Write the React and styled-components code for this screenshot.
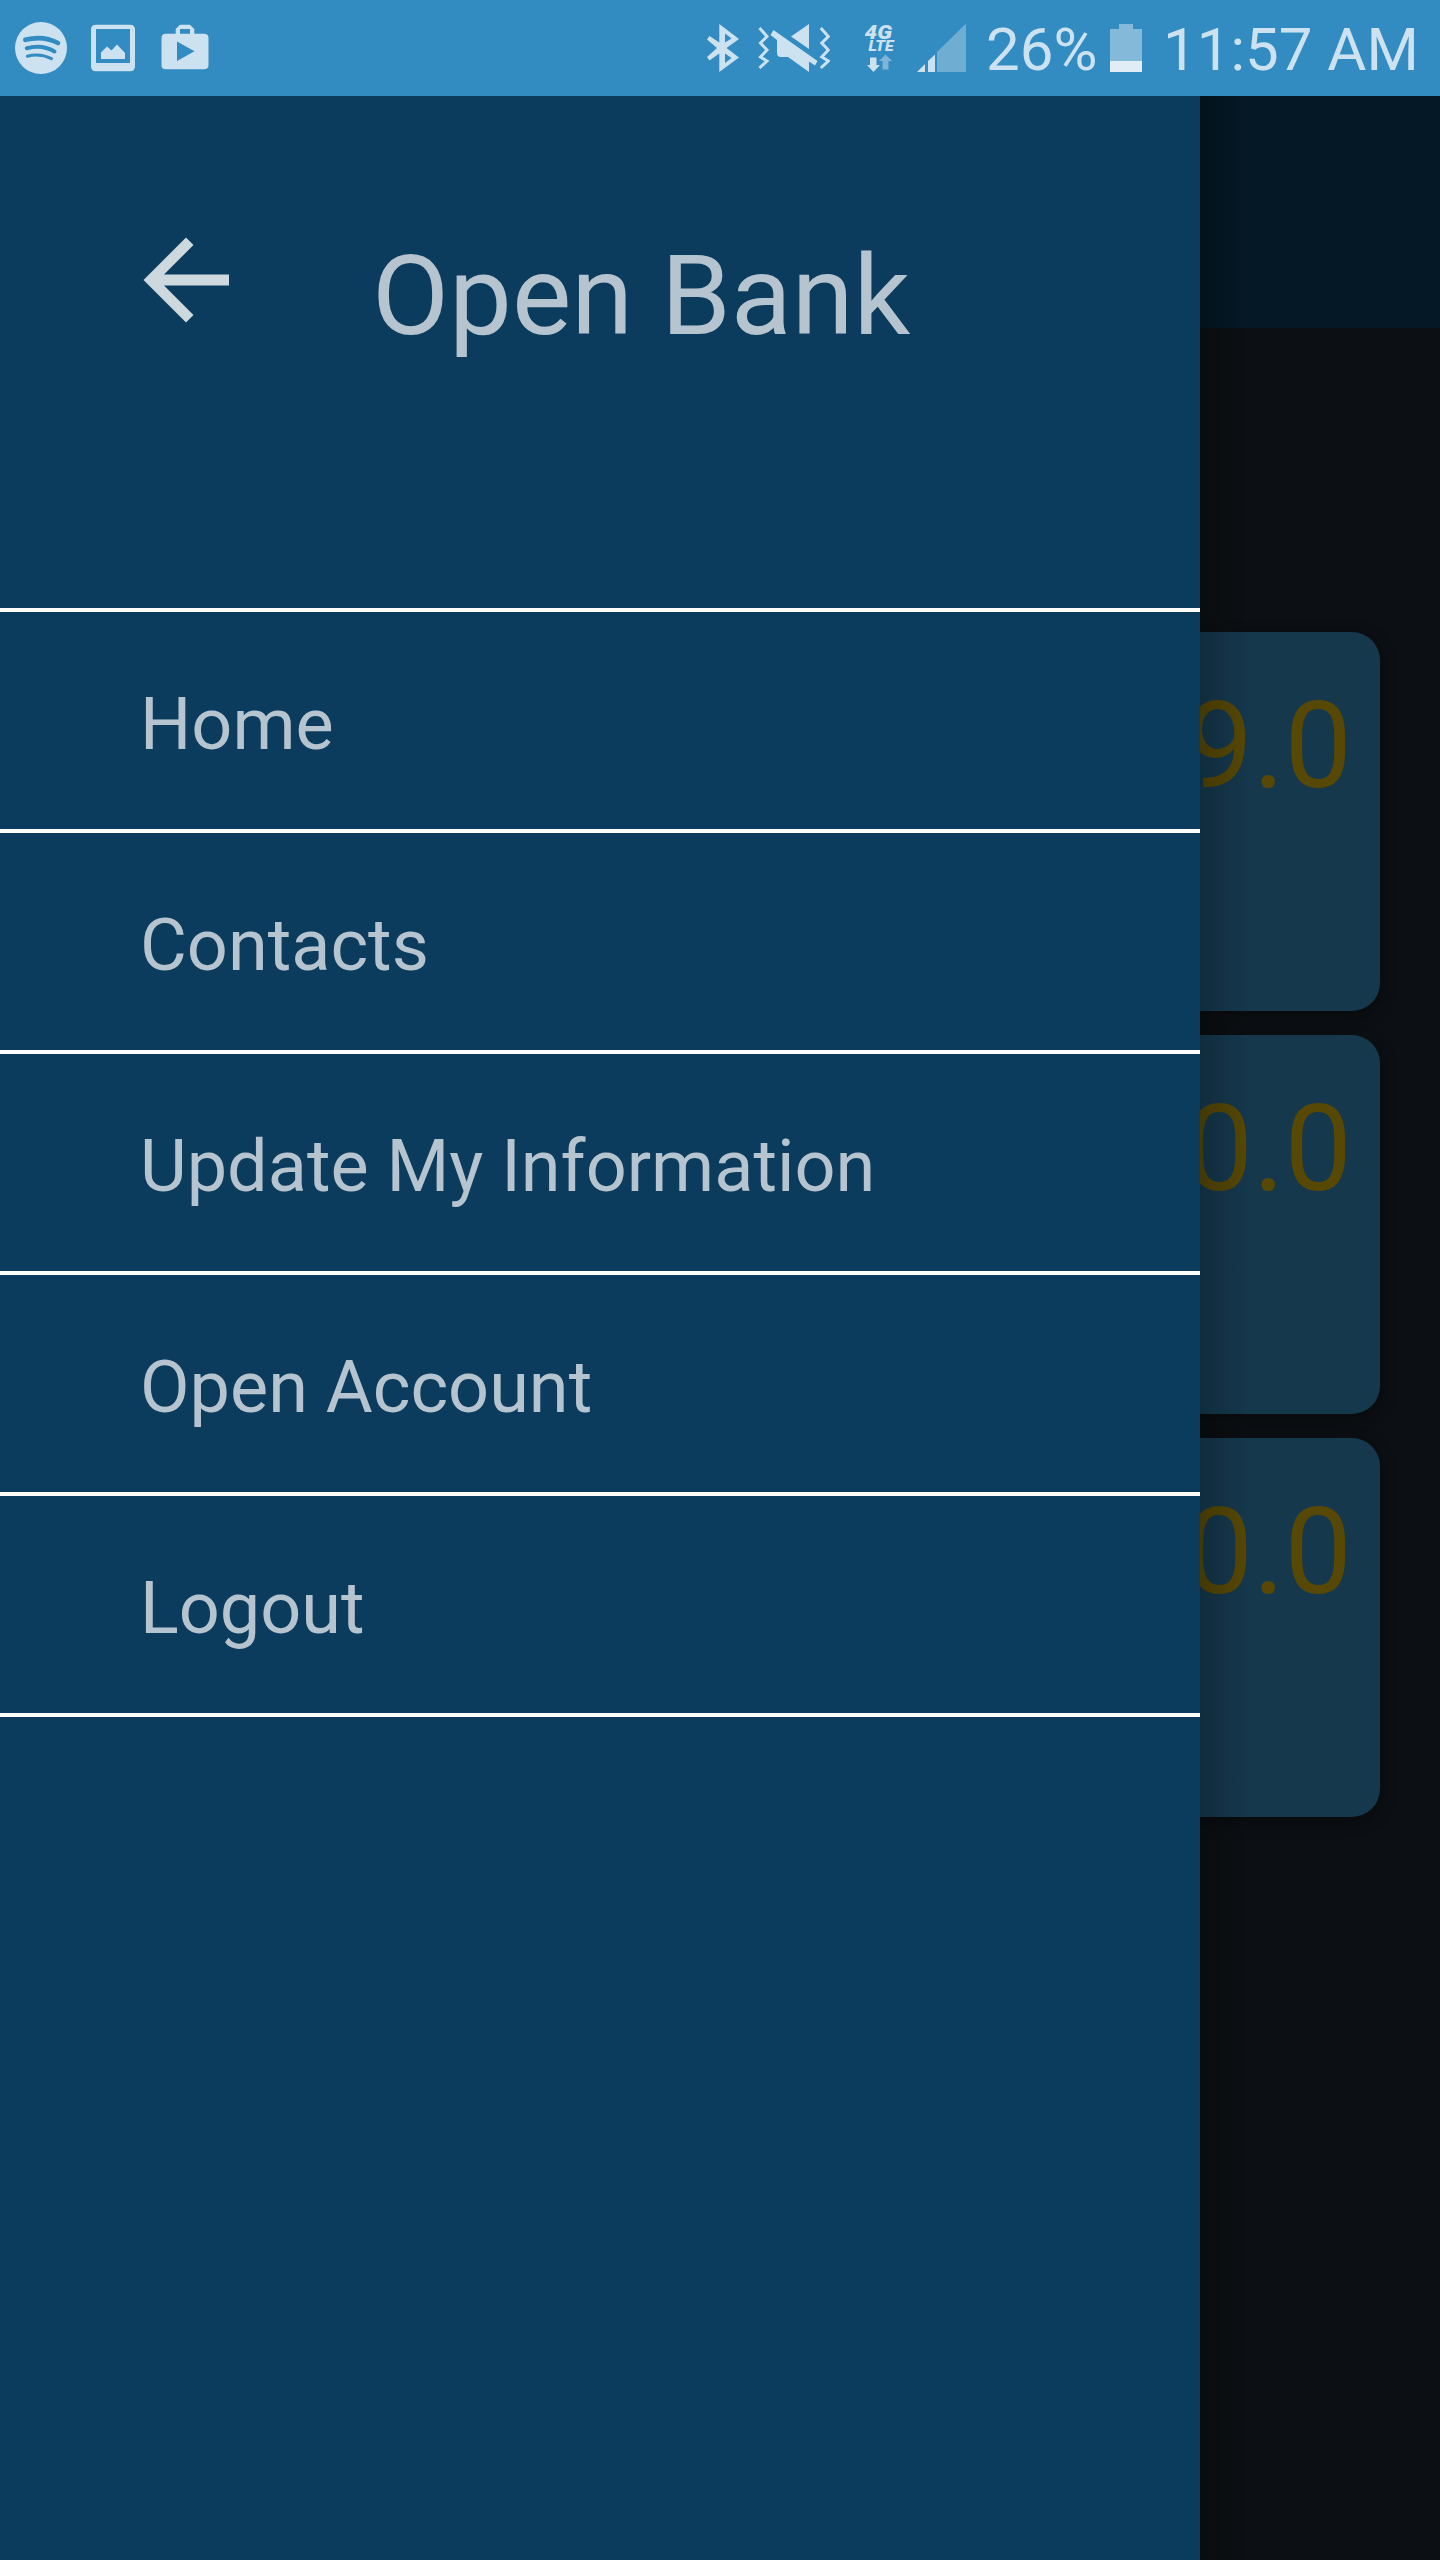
import React from "react";
import styled, { createGlobalStyle } from "styled-components";

const Global = createGlobalStyle`
  * { box-sizing: border-box; }
  body { margin: 0; background: #0c0f13; font-family: Roboto, "Noto Sans", sans-serif; }
`;

const Screen = styled.div`
  display: flex;
  flex-direction: column;
  width: 1440px;
  height: 2560px;
  overflow: hidden;
`;

const StatusBar = styled.header`
  display: flex;
  align-items: center;
  justify-content: space-between;
  height: 96px;
  flex: none;
  padding: 0 19px 0 15px;
  background: #328bc1;
  color: #cce2f0;
`;

const Cluster = styled.div`
  display: flex;
  align-items: center;
`;

const Glyph = styled.svg`
  display: block;
  flex: none;
  width: ${(p) => p.$w}px;
  height: 96px;
  margin-right: ${(p) => p.$gap || 0}px;
  fill: #cce2f0;
`;

const StatusText = styled.span`
  font-size: 60px;
  line-height: 96px;
  height: 96px;
  padding-top: 2px;
  white-space: pre;
  width: ${(p) => p.$w}px;
  margin-right: ${(p) => p.$gap || 0}px;
`;

const Body = styled.div`
  display: grid;
  grid-template-columns: 1200px 240px;
  flex: 1;
`;

const Drawer = styled.nav`
  display: flex;
  flex-direction: column;
  background: #0b3c5d;
  z-index: 1;
  grid-area: 1 / 1;
`;

const DrawerHeader = styled.div`
  display: flex;
  height: 512px;
  padding: 138px 0 0 140px;
`;

const BackArrow = styled.svg`
  width: 92px;
  height: 92px;
  margin-right: 140px;
  fill: #ced8df;
`;

const Title = styled.h1`
  margin: -4px 0 0;
  font-size: 112px;
  line-height: 132px;
  font-weight: 400;
  color: #b6c4cf;
`;

const Menu = styled.ul`
  margin: 0;
  padding: 0;
  list-style: none;
  border-top: 4px solid #fff;
`;

const MenuItem = styled.li`
  height: 221px;
  padding: 70px 0 0 140px;
  border-bottom: 4px solid #fff;
  font-size: 72px;
  line-height: 86px;
  color: #b6c4cf;
`;

const Accounts = styled.main`
  grid-area: 1 / 1 / 2 / 3;
  display: flex;
  flex-direction: column;
`;

const Toolbar = styled.div`
  height: 232px;
  background: #041825;
`;

const CardList = styled.div`
  display: flex;
  flex-direction: column;
  gap: 24px;
  padding: 304px 60px 0;
`;

const Card = styled.section`
  height: 379px;
  padding: 43px 28px 0;
  border-radius: 28px;
  background: #15384d;
  box-shadow: 0 4px 16px rgba(0, 0, 0, 0.35);
  text-align: right;
  font-size: 120px;
  line-height: 142px;
  color: #574805;
`;

const EdgeShadow = styled.div`
  grid-area: 1 / 2;
  width: 50px;
  background: linear-gradient(to right, rgba(0, 0, 0, 0.22), rgba(0, 0, 0, 0));
`;

const menu = ["Home", "Contacts", "Update My Information", "Open Account", "Logout"];
const balances = ["9.0", "0.0", "0.0"];

const SpotifyIcon = () => (
  <Glyph $w={52} $gap={24} viewBox="15 0 52 96">
    <circle cx="41" cy="48" r="26" />
    <g fill="none" stroke="#328bc1" strokeLinecap="round">
      <path d="M25.3 39.8Q43 35.2 58 43" strokeWidth="4.6" />
      <path d="M26.8 48.2Q42 44 54.5 51.5" strokeWidth="4" />
      <path d="M27.3 56.2Q40 53 51.5 58.7" strokeWidth="3" />
    </g>
  </Glyph>
);

const PictureIcon = () => (
  <Glyph $w={44} $gap={26} viewBox="91 0 44 96">
    <path
      fillRule="evenodd"
      d="M96 24.700H130Q135 24.700 135 29.700V66.300Q135 71.300 130 71.300H96Q91 71.300 91 66.300V29.700Q91 24.700 96 24.700ZM96 29V63H130V29Z"
    />
    <path d="M101 59V52.500L107 46.500L111.500 50.500L117 44.500L125 53V59Z" />
  </Glyph>
);

const PlayStoreIcon = () => (
  <Glyph $w={48} viewBox="161 0 48 96">
    <path
      fillRule="evenodd"
      d="M166 33.700H175.700V29L180 24.700H190L194.300 29V33.700H204Q208.500 33.700 208.500 38V65Q208.500 69.300 204 69.300H166Q161.500 69.300 161.500 65V38Q161.500 33.700 166 33.700ZM180 29V33.700H190V29ZM177 41.500V61L194.500 51.300Z"
    />
  </Glyph>
);

const BluetoothIcon = () => (
  <Glyph $w={32} $gap={19} viewBox="707 0 32 96">
    <path
      fillRule="evenodd"
      d="M719.300 24L739 39L726.500 48L739 57.500L719.300 72V53.500L709.500 60.500L707 57L717 48L707 39.500L709.500 36L719.300 42.500ZM725 33.500V42.500L731.500 38.500ZM725 53.500V63L731.500 58Z"
    />
  </Glyph>
);

const VibrateMuteIcon = () => (
  <Glyph $w={72} $gap={35} viewBox="758 0 72 96">
    <g fill="none" stroke="#cce2f0" strokeWidth="3">
      <path d="M759.500 28L767 36.500L760.500 43L767 50L760.500 57L767 61L759.500 68" />
      <path d="M820.800 28L828.300 36.500L821.800 43L828.300 50L821.800 57L828.300 61L820.800 68" />
    </g>
    <path d="M809 24V49L791 36.500Z" />
    <path d="M773.500 30L817.500 61L815 65.500L809 61.500V72L788 57H781Q777 57 777 53V40L770.500 35Z" />
  </Glyph>
);

const NetworkIcon = () => (
  <Glyph $w={30} $gap={22} viewBox="865 0 30 96">
    <g fontFamily="Roboto, sans-serif" fontWeight="900" fontStyle="italic">
      <text x="864.500" y="38.500" fontSize="20" textLength="27.500" lengthAdjust="spacingAndGlyphs">4G</text>
      <text x="868.500" y="51" fontSize="15.500" textLength="25" lengthAdjust="spacingAndGlyphs">LTE</text>
    </g>
    <path d="M870 57.500H876.500V65H880L873.500 72L867 65H870Z" />
    <path opacity="0.500" d="M882.500 69.500V61H879L885.500 54.500L892 61H888.500V69.500Z" />
  </Glyph>
);

const SignalIcon = () => (
  <Glyph $w={49} $gap={20} viewBox="917 0 49 96">
    <path d="M917 72L925 64V72ZM928 72V61L935 54.500V72Z" />
    <path fill="#70add3" d="M937 72V52L966 23.500V72Z" />
  </Glyph>
);

const BatteryIcon = () => (
  <Glyph $w={32} $gap={21} viewBox="1110 0 32 96">
    <path fill="#84b9da" d="M1110 29H1119V24H1133V29H1142V61H1110Z" />
    <path fill="#e0edf6" d="M1110 61H1142V72H1110Z" />
  </Glyph>
);

export default function App() {
  return (
    <Screen>
      <Global />
      <StatusBar>
        <Cluster>
          <SpotifyIcon />
          <PictureIcon />
          <PlayStoreIcon />
        </Cluster>
        <Cluster>
          <BluetoothIcon />
          <VibrateMuteIcon />
          <NetworkIcon />
          <SignalIcon />
          <StatusText $w={112} $gap={12}>26%</StatusText>
          <BatteryIcon />
          <StatusText $w={258}>11:57 AM</StatusText>
        </Cluster>
      </StatusBar>
      <Body>
        <Accounts>
          <Toolbar />
          <CardList>
            {balances.map((b, i) => (
              <Card key={i}>{b}</Card>
            ))}
          </CardList>
        </Accounts>
        <EdgeShadow />
        <Drawer>
          <DrawerHeader>
            <BackArrow viewBox="140 234 92 92">
              <path d="M143.500 280L186 237.500L193.500 245L164 274.500H229V285.500H164L193.500 315L186 322.500Z" />
            </BackArrow>
            <Title>Open Bank</Title>
          </DrawerHeader>
          <Menu>
            {menu.map((m) => (
              <MenuItem key={m}>{m}</MenuItem>
            ))}
          </Menu>
        </Drawer>
      </Body>
    </Screen>
  );
}
